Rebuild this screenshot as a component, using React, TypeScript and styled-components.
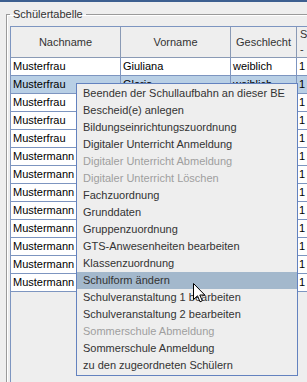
import React from 'react';
import styled, { createGlobalStyle } from 'styled-components';

const GlobalStyle = createGlobalStyle`
  html, body {
    margin: 0;
    padding: 0;
    background: #eeeeee;
    overflow: hidden;
  }
  * {
    box-sizing: border-box;
  }
`;

const Frame = styled.div`
  position: relative;
  width: 307px;
  height: 382px;
  overflow: hidden;
  background: #eeeeee;
  font-family: "Liberation Sans", Arial, sans-serif;
  font-size: 11px;
  color: #333333;
`;

const TitleEdge = styled.div`
  height: 2px;
  background: #3d5f90;
`;

const Content = styled.div`
  padding: 6px 0 0 6px;
`;

const Group = styled.fieldset`
  margin: 0;
  padding: 5px 0 0 3px;
  width: 420px;
  height: 420px;
  border: 1px solid #9a9a9a;
  box-shadow: inset 1px 1px 0 #ffffff, 1px 1px 0 #ffffff;
  min-width: 0;
`;

const GroupTitle = styled.legend`
  padding: 0 3px;
  line-height: 13px;
  font-size: 11px;
  color: #333333;
`;

const ScrollPane = styled.div`
  border: 1px solid #7d95c0;
  height: 400px;
  background: #eeeeee;
`;

const Grid = styled.table`
  border-collapse: separate;
  border-spacing: 0;
  table-layout: fixed;
  width: 346px;
`;

const HeadCell = styled.th<{ $left?: boolean }>`
  height: 29px;
  padding: ${p => (p.$left ? '0 0 0 3px' : '0')};
  border-right: 1px solid #8a9ab5;
  border-bottom: 1px solid #8a9ab5;
  background: #eeeeee;
  font-weight: normal;
  font-size: 11px;
  color: #333333;
  text-align: ${p => (p.$left ? 'left' : 'center')};
  line-height: ${p => (p.$left ? '15px' : '13px')};
  white-space: nowrap;
  overflow: hidden;
`;

const Cell = styled.td<{ $selected?: boolean }>`
  height: 18px;
  padding: 0 0 0 2px;
  border-right: 1px solid #7d95c0;
  border-bottom: 1px solid #7d95c0;
  background: ${p => (p.$selected ? '#b8cfe5' : '#ffffff')};
  color: #000000;
  white-space: nowrap;
  overflow: hidden;
  line-height: 13px;
`;

const Menu = styled.div`
  position: absolute;
  left: 76px;
  top: 83px;
  width: 222px;
  padding: 1px 0;
  border: 1px solid #6382bf;
  background: #eeeeee;
`;

const MenuItem = styled.div<{ $disabled?: boolean; $active?: boolean }>`
  height: 17px;
  line-height: 17px;
  padding-left: 6px;
  white-space: nowrap;
  color: ${p => (p.$disabled ? '#9e9e9e' : '#333333')};
  background: ${p => (p.$active ? '#a3b8cc' : 'transparent')};
`;

const Pointer = styled.svg`
  position: absolute;
  left: 193px;
  top: 283px;
`;

type Row = { last: string; first?: string; gender?: string; grade: string };

// only the cells the open popup leaves visible carry first name / gender
const rows: Row[] = [
  { last: 'Musterfrau', first: 'Giuliana', gender: 'weiblich', grade: '1' },
  { last: 'Musterfrau', first: 'Gloria', gender: 'weiblich', grade: '1' },
  { last: 'Musterfrau', grade: '1' },
  { last: 'Musterfrau', grade: '1' },
  { last: 'Musterfrau', grade: '1' },
  { last: 'Mustermann', grade: '1' },
  { last: 'Mustermann', grade: '1' },
  { last: 'Mustermann', grade: '1' },
  { last: 'Mustermann', grade: '1' },
  { last: 'Mustermann', grade: '1' },
  { last: 'Mustermann', grade: '1' },
  { last: 'Mustermann', grade: '1' },
  { last: 'Mustermann', grade: '1' },
];

const menuItems: { label: string; disabled?: boolean }[] = [
  { label: 'Beenden der Schullaufbahn an dieser BE' },
  { label: 'Bescheid(e) anlegen' },
  { label: 'Bildungseinrichtungszuordnung' },
  { label: 'Digitaler Unterricht Anmeldung' },
  { label: 'Digitaler Unterricht Abmeldung', disabled: true },
  { label: 'Digitaler Unterricht Löschen', disabled: true },
  { label: 'Fachzuordnung' },
  { label: 'Grunddaten' },
  { label: 'Gruppenzuordnung' },
  { label: 'GTS-Anwesenheiten bearbeiten' },
  { label: 'Klassenzuordnung' },
  { label: 'Schulform ändern' },
  { label: 'Schulveranstaltung 1 bearbeiten' },
  { label: 'Schulveranstaltung 2 bearbeiten' },
  { label: 'Sommerschule Abmeldung', disabled: true },
  { label: 'Sommerschule Anmeldung' },
  { label: 'zu den zugeordneten Schülern' },
];

const App: React.FC = () => {
  const selectedRow = 1;
  const activeItem = 'Schulform ändern';

  return (
    <Frame>
      <GlobalStyle />
      <TitleEdge />
      <Content>
        <Group>
          <GroupTitle>Schülertabelle</GroupTitle>
          <ScrollPane>
            <Grid>
              <colgroup>
                <col style={{ width: 110 }} />
                <col style={{ width: 110 }} />
                <col style={{ width: 66 }} />
                <col style={{ width: 60 }} />
              </colgroup>
              <thead>
                <tr>
                  <HeadCell>Nachname</HeadCell>
                  <HeadCell>Vorname</HeadCell>
                  <HeadCell>Geschlecht</HeadCell>
                  <HeadCell $left>
                    S
                    <br />-
                  </HeadCell>
                </tr>
              </thead>
              <tbody>
                {rows.map((r, i) => (
                  <tr key={i}>
                    <Cell $selected={i === selectedRow}>{r.last}</Cell>
                    <Cell $selected={i === selectedRow}>{r.first}</Cell>
                    <Cell $selected={i === selectedRow}>{r.gender}</Cell>
                    <Cell $selected={i === selectedRow}>{r.grade}</Cell>
                  </tr>
                ))}
              </tbody>
            </Grid>
          </ScrollPane>
        </Group>
      </Content>

      <Menu>
        {menuItems.map(item => (
          <MenuItem
            key={item.label}
            $disabled={item.disabled}
            $active={item.label === activeItem}
          >
            {item.label}
          </MenuItem>
        ))}
      </Menu>

      <Pointer width="13" height="20" viewBox="0 0 13 20">
        <path
          d="M0.5 0.5 L0.5 16.5 L4.5 12.8 L7 18.8 L9.3 17.8 L6.8 12 L11.8 12 Z"
          fill="#ffffff"
          stroke="#000000"
          strokeWidth="1"
          strokeLinejoin="miter"
        />
      </Pointer>
    </Frame>
  );
};

export default App;
